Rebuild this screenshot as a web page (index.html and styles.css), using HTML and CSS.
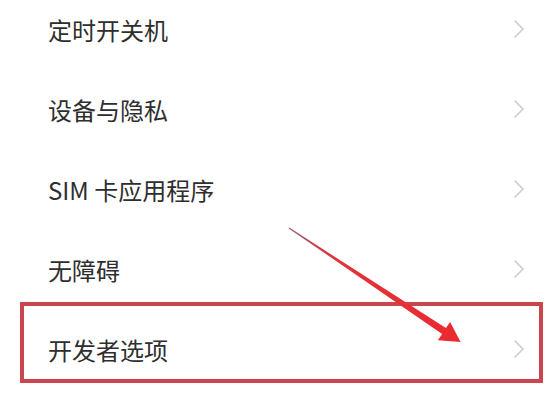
FILE: index.html
```html
<!DOCTYPE html>
<html lang="zh">
<head>
<meta charset="utf-8">
<link rel="stylesheet" href="styles.css">
</head>
<body>
<div class="screen">
  <ul class="menu">
    <li class="row"><span class="label">定时开关机</span><svg class="chev" viewBox="0 0 12 20"><path d="M1.5 1.5 L10 10 L1.5 18.5"/></svg></li>
    <li class="row"><span class="label">设备与隐私</span><svg class="chev" viewBox="0 0 12 20"><path d="M1.5 1.5 L10 10 L1.5 18.5"/></svg></li>
    <li class="row"><span class="label">SIM 卡应用程序</span><svg class="chev" viewBox="0 0 12 20"><path d="M1.5 1.5 L10 10 L1.5 18.5"/></svg></li>
    <li class="row"><span class="label">无障碍</span><svg class="chev" viewBox="0 0 12 20"><path d="M1.5 1.5 L10 10 L1.5 18.5"/></svg></li>
    <li class="row"><span class="label">开发者选项</span><svg class="chev" viewBox="0 0 12 20"><path d="M1.5 1.5 L10 10 L1.5 18.5"/></svg></li>
  </ul>
  <svg class="annot" viewBox="0 0 550 400" width="550" height="400">
    <defs>
      <linearGradient id="ag" x1="289" y1="228" x2="460" y2="342" gradientUnits="userSpaceOnUse">
        <stop offset="0" stop-color="#9a5a6a"/>
        <stop offset="0.25" stop-color="#e0343c"/>
        <stop offset="1" stop-color="#ea2a30"/>
      </linearGradient>
    </defs>
    <rect class="hl" x="22" y="304" width="519" height="77"/>
    <polygon fill="url(#ag)" points="289.3,227.6 445.9,328.1 450.1,321.9 460.6,342.1 437.9,340.2 442.1,333.9 288.7,228.4"/>
  </svg>
</div>
</body>
</html>
```
FILE: styles.css
```css
html, body {
  margin: 0;
  padding: 0;
  background: #ffffff;
}
.screen {
  position: relative;
  width: 550px;
  height: 400px;
  overflow: hidden;
  font-family: "Noto Sans CJK SC", "Noto Sans", sans-serif;
}
.menu {
  list-style: none;
  margin: -11px 0 0 0;
  padding: 0;
}
.row {
  height: 80px;
  display: flex;
  align-items: center;
  justify-content: space-between;
  padding: 0 25px 0 48px;
}
.label {
  font-size: 24px;
  color: #2e2e2e;
  letter-spacing: 0;
}
.chev {
  width: 12px;
  height: 20px;
}
.chev path {
  fill: none;
  stroke: #cccccc;
  stroke-width: 1.6;
}
.annot {
  position: absolute;
  left: 0;
  top: 0;
}
.hl {
  fill: none;
  stroke: #c9464e;
  stroke-width: 4;
}
```
